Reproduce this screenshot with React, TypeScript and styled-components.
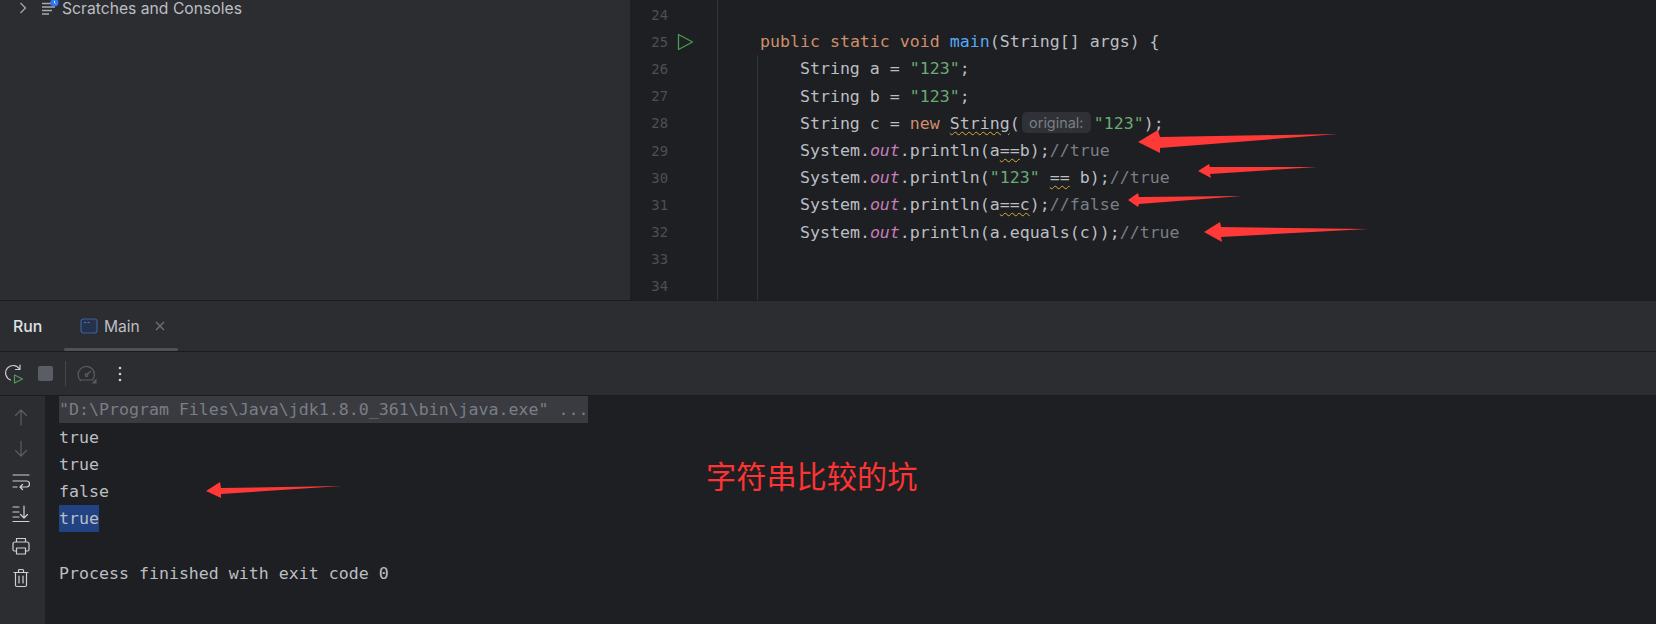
import React from 'react';
import styled, { createGlobalStyle } from 'styled-components';

const mono = `"DejaVu Sans Mono", "Liberation Mono", monospace`;
const ui = `Inter, "Noto Sans", sans-serif`;

const GlobalStyle = createGlobalStyle`
    html, body {
        margin: 0;
        padding: 0;
        background: #1e1f22;
    }
`;

const Page = styled.div`
    position: relative;
    width: 1656px;
    height: 624px;
    overflow: hidden;
    display: flex;
    flex-direction: column;
    background: #1e1f22;
    color: #bcbec4;
    font-family: ${ui};
`;

const TopArea = styled.div`
    display: flex;
    height: 300px;
    flex-shrink: 0;
    border-bottom: 1px solid #1a1b1e;
`;

const ProjectPanel = styled.div`
    width: 630px;
    flex-shrink: 0;
    background: #2b2d30;
`;

const TreeRow = styled.div`
    display: flex;
    align-items: center;
    height: 16px;
    padding-left: 19px;
    font-size: 15.7px;
    color: #bcbec4;
    svg { flex-shrink: 0; }
`;

const TreeIcon = styled.svg`
    margin-left: 14px;
    margin-right: 3px;
`;

const Gutter = styled.div`
    width: 87px;
    flex-shrink: 0;
    padding-top: 1px;
    border-right: 1px solid #313438;
`;

const GutterRow = styled.div`
    display: flex;
    align-items: center;
    height: 27.2px;
`;

const LineNumber = styled.span`
    width: 38px;
    text-align: right;
    font-family: ${mono};
    font-size: 13.9px;
    color: #4b5059;
`;

const RunMark = styled.svg`
    margin-left: 9px;
`;

const Code = styled.div`
    flex: 1;
    padding-top: 1px;
    overflow: hidden;
`;

const CodeLine = styled.div<{ $guided?: boolean }>`
    position: relative;
    height: 27.2px;
    line-height: 27.2px;
    padding-left: 2px;
    font-family: ${mono};
    font-size: 16.6px;
    white-space: pre;
    color: #bcbec4;

    ${(p) =>
        p.$guided &&
        `&::before {
            content: '';
            position: absolute;
            left: 39px;
            top: 0;
            bottom: 0;
            width: 1px;
            background: #313438;
        }`}
`;

const tokenColors = {
    plain: '#bcbec4',
    keyword: '#cf8e6d',
    string: '#6aab73',
    method: '#56a8f5',
    field: '#c77dbb',
    comment: '#7a7e85',
};

type TokenKind = keyof typeof tokenColors;

const Token = styled.span<{ $kind: TokenKind; $warn?: boolean }>`
    color: ${(p) => tokenColors[p.$kind]};
    font-style: ${(p) => (p.$kind === 'field' ? 'italic' : 'normal')};
    ${(p) =>
        p.$warn &&
        `text-decoration: underline wavy #d4ad3a 1px;
         text-underline-offset: 2px;`}
`;

const HintPill = styled.span`
    display: inline-block;
    width: 69px;
    height: 21px;
    margin: 0 3px 0 2px;
    line-height: 21px;
    vertical-align: 1px;
    text-align: center;
    border-radius: 5px;
    background: #2f3136;
    color: #7a7e85;
    font-family: ${ui};
    font-size: 14.4px;
`;

const RunPanel = styled.div`
    flex: 1;
    display: flex;
    flex-direction: column;
    min-height: 0;
`;

const TabBar = styled.div`
    display: flex;
    align-items: center;
    height: 50px;
    flex-shrink: 0;
    padding-left: 13px;
    background: #2b2d30;
    border-bottom: 1px solid #1a1b1e;
`;

const PanelTitle = styled.span`
    width: 51px;
    font-size: 15.8px;
    font-weight: 500;
    color: #dfe1e5;
`;

const Tab = styled.div`
    position: relative;
    display: flex;
    align-items: center;
    width: 114px;
    height: 100%;
    padding-left: 16px;
    box-sizing: border-box;
    font-size: 15.6px;
    color: #bcbec4;

    &::after {
        content: '';
        position: absolute;
        left: 0;
        right: 0;
        bottom: 0;
        height: 3px;
        border-radius: 2px;
        background: #4e5157;
    }
`;

const TabName = styled.span`
    margin: 0 15px 0 6px;
`;

const Toolbar = styled.div`
    display: flex;
    align-items: center;
    height: 43px;
    flex-shrink: 0;
    padding-left: 5px;
    background: #2b2d30;
    border-bottom: 1px solid #1a1b1e;
`;

const ToolbarIcon = styled.svg<{ $gap: number }>`
    margin-right: ${(p) => p.$gap}px;
    flex-shrink: 0;
`;

const ToolbarDivider = styled.div`
    width: 1px;
    height: 25px;
    margin-right: 11px;
    background: #43454a;
`;

const ConsoleArea = styled.div`
    flex: 1;
    display: flex;
    min-height: 0;
`;

const SideTools = styled.div`
    width: 45px;
    flex-shrink: 0;
    display: flex;
    flex-direction: column;
    align-items: center;
    padding-top: 11px;
    padding-right: 4px;
    box-sizing: border-box;
    gap: 12.3px;
    background: #2b2d30;
`;

const ConsoleOutput = styled.div`
    flex: 1;
    padding-left: 14px;
    font-family: ${mono};
    font-size: 16.6px;
    line-height: 27.2px;
    white-space: pre;
`;

const ConsoleLine = styled.div`
    height: 27.2px;
    color: #bcbec4;

    &:first-child {
        height: 27.6px;
    }
`;

const CommandText = styled.span`
    display: inline-block;
    width: 529px;
    background: #393b40;
    color: #7a7e85;
`;

const SelectedText = styled.span`
    display: inline-block;
    background: #214283;
`;

const ArrowLayer = styled.svg`
    position: absolute;
    left: 0;
    top: 0;
    pointer-events: none;
`;

const Annotation = styled.div`
    position: absolute;
    left: 706px;
    top: 454px;
    font-family: "Noto Sans CJK SC", sans-serif;
    font-size: 30.2px;
    line-height: 42px;
    color: #ff3333;
    white-space: nowrap;
`;

type Part = [string, TokenKind?, boolean?];

const println = (...rest: Part[]): Part[] => [
    ['System.'],
    ['out', 'field'],
    ['.println('],
    ...rest,
];

const codeLines: { no: number; parts: Part[]; run?: boolean; guided?: boolean; hint?: number }[] = [
    { no: 24, parts: [] },
    {
        no: 25,
        run: true,
        parts: [
            ['    '],
            ['public static void ', 'keyword'],
            ['main', 'method'],
            ['(String[] args) {'],
        ],
    },
    { no: 26, guided: true, parts: [['        String a = '], ['"123"', 'string'], [';']] },
    { no: 27, guided: true, parts: [['        String b = '], ['"123"', 'string'], [';']] },
    {
        no: 28,
        guided: true,
        hint: 4,
        parts: [
            ['        String c = '],
            ['new ', 'keyword'],
            ['String', 'plain', true],
            ['('],
            ['"123"', 'string'],
            [');'],
        ],
    },
    {
        no: 29,
        guided: true,
        parts: [['        '], ...println(['a'], ['==', 'plain', true], ['b);'], ['//true', 'comment'])],
    },
    {
        no: 30,
        guided: true,
        parts: [['        '], ...println(['"123"', 'string'], [' '], ['==', 'plain', true], [' b);'], ['//true', 'comment'])],
    },
    {
        no: 31,
        guided: true,
        parts: [['        '], ...println(['a'], ['==c', 'plain', true], [');'], ['//false', 'comment'])],
    },
    {
        no: 32,
        guided: true,
        parts: [['        '], ...println(['a.equals(c));'], ['//true', 'comment'])],
    },
    { no: 33, guided: true, parts: [] },
    { no: 34, guided: true, parts: [] },
];

const arrows = [
    '1138,142 1158,130 1160,137 1338,134 1160,148 1160,153',
    '1198,171 1209,164 1210,167 1317,167 1210,174 1211,178',
    '1128,200 1138,193 1139,197 1242,196 1139,204 1138,207',
    '1204,232 1220,222 1221,227 1368,229 1221,237 1222,242',
    '206,491 220,482 221,488 342,486 221,494 221,498',
];

const stroke = { fill: 'none', stroke: '#ced0d6', strokeWidth: 1.2, strokeLinecap: 'round' as const, strokeLinejoin: 'round' as const };
const dimStroke = { ...stroke, stroke: '#5a5d63' };

const App: React.FC = () => (
    <Page>
        <GlobalStyle />
        <TopArea>
            <ProjectPanel>
                <TreeRow>
                    <svg width="8" height="12" viewBox="0 0 8 12">
                        <path d="M1.5 1 L6.5 6 L1.5 11" fill="none" stroke="#a8abb0" strokeWidth="1.2" />
                    </svg>
                    <TreeIcon width="18" height="16" viewBox="0 0 18 16">
                        <path d="M1 3.5h9M1 7h13M1 10.5h10M1 14h7" fill="none" stroke="#a8abb0" strokeWidth="1.3" />
                        <circle cx="13.5" cy="2.5" r="4" fill="#3574f0" />
                        <path d="M13.5 0.8v2l1 0.8" fill="none" stroke="#fff" strokeWidth="0.9" />
                    </TreeIcon>
                    Scratches and Consoles
                </TreeRow>
            </ProjectPanel>
            <Gutter>
                {codeLines.map((line) => (
                    <GutterRow key={line.no}>
                        <LineNumber>{line.no}</LineNumber>
                        {line.run && (
                            <RunMark width="17" height="18" viewBox="0 0 17 18">
                                <path d="M1.5 1.5 L15.5 9 L1.5 16.5 Z" fill="none" stroke="#499c54" strokeWidth="1.3" strokeLinejoin="round" />
                            </RunMark>
                        )}
                    </GutterRow>
                ))}
            </Gutter>
            <Code>
                {codeLines.map((line) => (
                    <CodeLine key={line.no} $guided={line.guided}>
                        {line.parts.map(([text, kind = 'plain', warn], i) => (
                            <React.Fragment key={i}>
                                {line.hint === i && <HintPill>original:</HintPill>}
                                <Token $kind={kind} $warn={warn}>{text}</Token>
                            </React.Fragment>
                        ))}
                    </CodeLine>
                ))}
            </Code>
        </TopArea>

        <RunPanel>
            <TabBar>
                <PanelTitle>Run</PanelTitle>
                <Tab>
                    <svg width="18" height="16" viewBox="0 0 18 16">
                        <rect x="1" y="1" width="16" height="14" rx="2.5" fill="#25324d" stroke="#3d5f9e" strokeWidth="1.2" />
                        <path d="M4 4.5h2M7.5 4.5h2" stroke="#5478b8" strokeWidth="1" />
                    </svg>
                    <TabName>Main</TabName>
                    <svg width="10" height="10" viewBox="0 0 10 10">
                        <path d="M1 1 L9 9 M9 1 L1 9" stroke="#6f737a" strokeWidth="1.2" />
                    </svg>
                </Tab>
            </TabBar>
            <Toolbar>
                <ToolbarIcon $gap={14} width="19" height="20" viewBox="0 0 19 20">
                    <path d="M14.5 5 A7.5 7.5 0 1 0 5.5 16" {...stroke} />
                    <path d="M15 1 V5.5 H10.5" {...stroke} />
                    <path d="M9.5 11 L17.5 15 L9.5 19 Z" fill="none" stroke="#57965c" strokeWidth="1.2" strokeLinejoin="round" />
                </ToolbarIcon>
                <ToolbarIcon $gap={12} width="15" height="15" viewBox="0 0 15 15">
                    <rect width="15" height="15" rx="2" fill="#5a5d63" />
                </ToolbarIcon>
                <ToolbarDivider />
                <ToolbarIcon $gap={21} width="20" height="20" viewBox="0 0 20 20">
                    <path d="M3.5 16.5 A8.2 8.2 0 1 1 15.5 16 H3.5" {...dimStroke} />
                    <circle cx="9.5" cy="11" r="1.3" {...dimStroke} />
                    <path d="M10.5 10 L13.5 7.5" {...dimStroke} />
                    <path d="M19.5 14.5 V19.5 H14.5 Z" fill="#5a5d63" />
                </ToolbarIcon>
                <svg width="4" height="16" viewBox="0 0 4 16">
                    <circle cx="2" cy="2" r="1.3" fill="#ced0d6" />
                    <circle cx="2" cy="8" r="1.3" fill="#ced0d6" />
                    <circle cx="2" cy="14" r="1.3" fill="#ced0d6" />
                </svg>
            </Toolbar>
            <ConsoleArea>
                <SideTools>
                    <svg width="16" height="20" viewBox="0 0 16 20">
                        <path d="M8 18 V3 M2.5 8.5 L8 3 L13.5 8.5" {...dimStroke} />
                    </svg>
                    <svg width="16" height="20" viewBox="0 0 16 20">
                        <path d="M8 2 V17 M2.5 11.5 L8 17 L13.5 11.5" {...dimStroke} />
                    </svg>
                    <svg width="18" height="20" viewBox="0 0 18 20">
                        <path d="M1 3h16M1 9h13.5a2.7 2.7 0 0 1 0 6H8M10.5 12.5 L8 15 L10.5 17.5M1 15h4" {...stroke} />
                    </svg>
                    <svg width="18" height="20" viewBox="0 0 18 20">
                        <path d="M1 3h6M1 8h6M1 13h6M1 17.5h16M12 2v12M8.5 10.5 L12 14 L15.5 10.5" {...stroke} />
                    </svg>
                    <svg width="18" height="20" viewBox="0 0 18 20">
                        <path d="M4.5 6V2.5h9V6M4.5 15H2.5a1.5 1.5 0 0 1-1.5-1.5V8a2 2 0 0 1 2-2h12a2 2 0 0 1 2 2v5.5a1.5 1.5 0 0 1-1.5 1.5h-2" {...stroke} />
                        <rect x="4.5" y="12" width="9" height="6" {...stroke} />
                    </svg>
                    <svg width="16" height="20" viewBox="0 0 16 20">
                        <path d="M1 4.5h14M5.5 4.5V2.5a1 1 0 0 1 1-1h3a1 1 0 0 1 1 1v2M2.5 4.5V17a1.5 1.5 0 0 0 1.5 1.5h8a1.5 1.5 0 0 0 1.5-1.5V4.5M6 8v7M10 8v7" {...stroke} />
                    </svg>
                </SideTools>
                <ConsoleOutput>
                    <ConsoleLine>
                        <CommandText>"D:\Program Files\Java\jdk1.8.0_361\bin\java.exe" ...</CommandText>
                    </ConsoleLine>
                    <ConsoleLine>true</ConsoleLine>
                    <ConsoleLine>true</ConsoleLine>
                    <ConsoleLine>false</ConsoleLine>
                    <ConsoleLine>
                        <SelectedText>true</SelectedText>
                    </ConsoleLine>
                    <ConsoleLine />
                    <ConsoleLine>Process finished with exit code 0</ConsoleLine>
                </ConsoleOutput>
            </ConsoleArea>
        </RunPanel>

        <Annotation>字符串比较的坑</Annotation>
        <ArrowLayer width="1656" height="624" viewBox="0 0 1656 624">
            {arrows.map((points) => (
                <polygon key={points} points={points} fill="#ff3838" />
            ))}
        </ArrowLayer>
    </Page>
);

export default App;
